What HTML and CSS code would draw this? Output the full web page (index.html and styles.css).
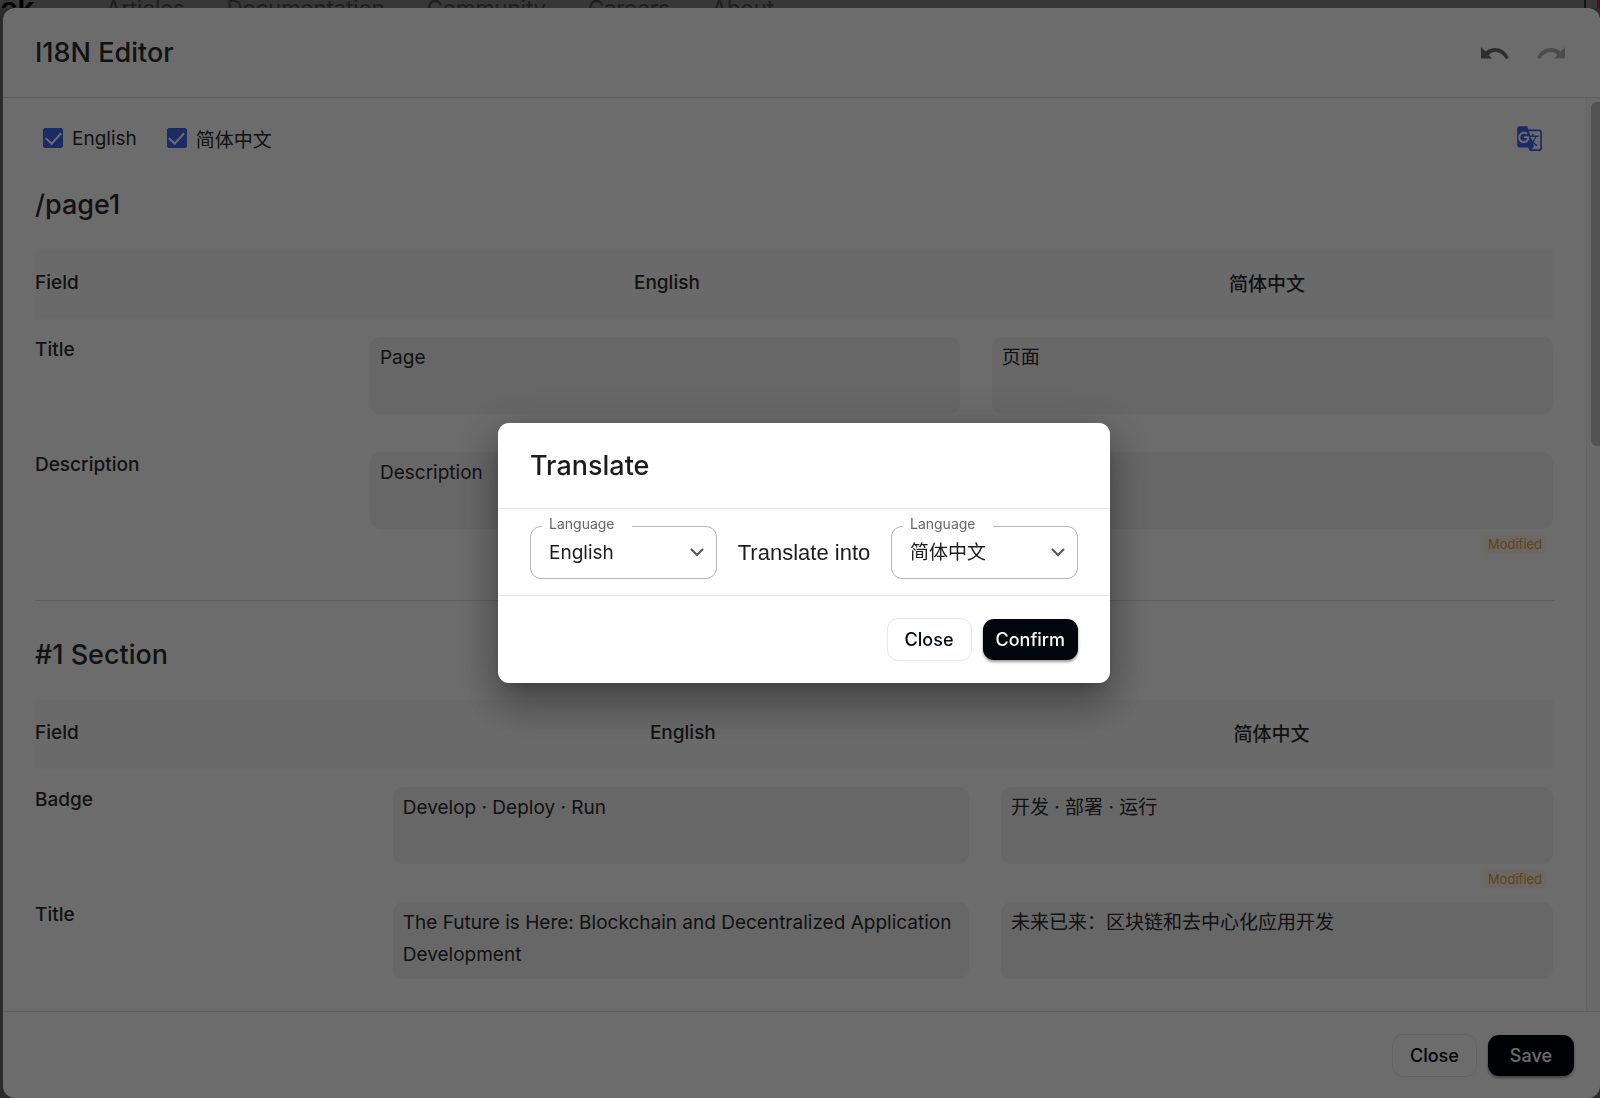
FILE: index.html
```html
<!DOCTYPE html>
<html lang="en">
<head>
    <meta charset="UTF-8">
    <title>I18N Editor</title>
    <link rel="stylesheet" href="styles.css">
</head>
<body>
    <!-- Site navigation behind the editor -->
    <nav class="site-nav">
        <a class="brand" href="#">ck</a>
        <a href="#">Articles</a>
        <a href="#">Documentation</a>
        <a href="#">Community</a>
        <a href="#">Careers</a>
        <a href="#">About</a>
        <span class="nav-edge"></span>
    </nav>

    <!-- Editor panel -->
    <main class="editor">
        <header class="editor-header">
            <h1>I18N Editor</h1>
            <div class="history">
                <button class="icon-button" type="button" aria-label="Undo">
                    <svg viewBox="0 0 28 12"><path d="M0 0v11.500h11L7.600 8C9.300 6.100 11.500 5 14 5c4.400 0 8 2.400 10.200 6.200q1 1 2.400.2 1.200-.8.700-2C24.600 4.200 19.800 1 14 1 10.500 1 7 2.300 4.500 4.500z"/></svg>
                </button>
                <button class="icon-button faded" type="button" aria-label="Redo">
                    <svg viewBox="0 0 28 12"><path d="M28 0v11.500H17L20.400 8C18.700 6.100 16.500 5 14 5c-4.400 0-8 2.400-10.200 6.200q-1 1-2.400.2-1.200-.8-.7-2C3.400 4.200 8.200 1 14 1c3.500 0 7 1.300 9.500 3.500z"/></svg>
                </button>
            </div>
        </header>

        <div class="editor-body">
            <div class="content">
                <div class="toolbar">
                    <label class="check"><input type="checkbox" checked> English</label>
                    <label class="check"><input type="checkbox" checked> 简体中文</label>
                    <button class="icon-button translate" type="button" aria-label="Translate">
                        <svg viewBox="0 0 24 24"><path d="M21 4H11l-1-3H3c-1.100 0-2 .9-2 2v15c0 1.100.9 2 2 2h8l1 3h9c1.100 0 2-.9 2-2V6c0-1.100-.9-2-2-2zM7 16c-2.760 0-5-2.240-5-5s2.240-5 5-5c1.350 0 2.480.5 3.350 1.300L9.030 8.570c-.38-.36-1.040-.78-2.030-.78-1.740 0-3.150 1.440-3.150 3.210S5.260 14.210 7 14.210c2.010 0 2.840-1.440 2.920-2.410H7v-1.710h4.680c.07.310.12.610.12 1.020C11.800 13.970 9.890 16 7 16zm6.170-5.420h3.700c-.43 1.250-1.110 2.430-2.050 3.470-.31-.35-.6-.72-.86-1.100l-.79-2.370zm8.330 9.920c0 .55-.45 1-1 1H14l2-2.500-1.040-3.100 3.100 3.100.92-.92-3.300-3.250.02-.02c1.130-1.250 1.930-2.690 2.400-4.220H20v-1.300h-4.530V8h-1.290v1.290h-1.440L11.460 5.500h9.040c.55 0 1 .45 1 1v14z"/></svg>
                    </button>
                </div>

                <section>
                    <h2>/page1</h2>
                    <table class="fields page-fields">
                        <colgroup><col class="col-name"><col class="col-en"><col></colgroup>
                        <thead>
                            <tr><th>Field</th><th>English</th><th>简体中文</th></tr>
                        </thead>
                        <tbody>
                            <tr>
                                <td>Title</td>
                                <td><textarea aria-label="Title, English">Page</textarea></td>
                                <td><textarea aria-label="Title, 简体中文">页面</textarea></td>
                            </tr>
                            <tr>
                                <td>Description</td>
                                <td><textarea aria-label="Description, English">Description</textarea></td>
                                <td><textarea aria-label="Description, 简体中文"></textarea><span class="modified">Modified</span></td>
                            </tr>
                        </tbody>
                    </table>
                </section>

                <hr>

                <section>
                    <h2>#1 Section</h2>
                    <table class="fields section-fields">
                        <colgroup><col class="col-name"><col class="col-en"><col></colgroup>
                        <thead>
                            <tr><th>Field</th><th>English</th><th>简体中文</th></tr>
                        </thead>
                        <tbody>
                            <tr>
                                <td>Badge</td>
                                <td><textarea aria-label="Badge, English">Develop · Deploy · Run</textarea></td>
                                <td><textarea aria-label="Badge, 简体中文">开发 · 部署 · 运行</textarea><span class="modified">Modified</span></td>
                            </tr>
                            <tr>
                                <td>Title</td>
                                <td><textarea aria-label="Title, English">The Future is Here: Blockchain and Decentralized Application Development</textarea></td>
                                <td><textarea aria-label="Title, 简体中文">未来已来：区块链和去中心化应用开发</textarea></td>
                            </tr>
                        </tbody>
                    </table>
                </section>
            </div>
            <div class="scrollbar"><div class="thumb"></div></div>
        </div>

        <footer class="editor-footer">
            <button class="button" type="button">Close</button>
            <button class="button primary save" type="button">Save</button>
        </footer>
    </main>

    <!-- Translate dialog -->
    <div class="backdrop">
        <div class="dialog" role="dialog" aria-labelledby="dialog-title">
            <h2 id="dialog-title">Translate</h2>
            <div class="dialog-body">
                <div class="select">
                    <label for="from">Language</label>
                    <select id="from"><option>English</option><option>简体中文</option></select>
                    <svg viewBox="0 0 14 9"><path d="M1 1l6 6 6-6"/></svg>
                </div>
                <span class="into">Translate into</span>
                <div class="select">
                    <label for="to">Language</label>
                    <select id="to"><option>简体中文</option><option>English</option></select>
                    <svg viewBox="0 0 14 9"><path d="M1 1l6 6 6-6"/></svg>
                </div>
            </div>
            <div class="dialog-actions">
                <button class="button" type="button">Close</button>
                <button class="button primary" type="button">Confirm</button>
            </div>
        </div>
    </div>
</body>
</html>
```
FILE: styles.css
```css
* {
    box-sizing: border-box;
}

body {
    margin: 0;
    height: 100vh;
    overflow: hidden;
    display: flex;
    flex-direction: column;
    background-color: #666;
    color: #2b2b2d;
    font-family: Inter, "Noto Sans CJK SC", sans-serif;
    font-size: 19px;
}

h1, h2 {
    margin: 0;
    font-size: 27px;
    font-weight: 500;
    line-height: 40px;
}

button, select, textarea {
    font-family: inherit;
    color: inherit;
}

/* Navigation */
.site-nav {
    height: 8px;
    display: flex;
    align-items: flex-start;
    gap: 42px;
    line-height: 16px;
    font-size: 22px;
    background-color: #828282;
    overflow: hidden;
}

.site-nav a {
    color: #484848;
    text-decoration: none;
}

.site-nav .brand {
    width: 64px;
    color: #000;
    font-size: 30px;
    font-weight: 600;
}

.nav-edge {
    width: 16px;
    height: 8px;
    margin-left: auto;
    border-left: 2px solid #333;
    border-right: 3px solid #a03048;
}

/* Editor */
.editor {
    flex: 1;
    min-height: 0;
    margin-left: 3px;
    display: flex;
    flex-direction: column;
    background-color: #fff;
    border-radius: 12px;
    overflow: hidden;
}

.editor-header {
    height: 90px;
    padding: 0 35px 0 32px;
    display: flex;
    align-items: center;
    justify-content: space-between;
    border-bottom: 1px solid #dedede;
}

.history {
    display: flex;
    gap: 28px;
}

.icon-button {
    padding: 0;
    border: none;
    background: none;
    cursor: pointer;
}

.icon-button svg {
    display: block;
    width: 28px;
    height: 12px;
    fill: #707070;
}

.icon-button.faded svg {
    fill: #b4b4b4;
}

.editor-body {
    flex: 1;
    min-height: 0;
    display: flex;
    overflow: hidden;
}

.content {
    flex: 1;
    padding: 16px 32px;
}

.scrollbar {
    width: 14px;
    padding: 4px 0 0 4px;
    border-left: 1px solid #ececec;
    background-color: #fafafa;
}

.thumb {
    height: 344px;
    border-radius: 6px 0 0 6px;
    background-color: #c1c1c1;
}

.toolbar {
    height: 48px;
    padding: 0 11px 0 8px;
    display: flex;
    align-items: center;
    gap: 30px;
}

.check {
    display: flex;
    align-items: center;
    gap: 9px;
}

.check input {
    appearance: none;
    display: flex;
    justify-content: center;
    width: 20px;
    height: 20px;
    margin: 0;
    border: 1px solid #4066ea;
    border-radius: 2px;
}

.check input:checked {
    background-color: #4066ea;
}

/* tick mark */
.check input:checked::after {
    content: "";
    width: 7px;
    height: 13px;
    border: solid #fff;
    border-width: 0 2px 2px 0;
    transform: rotate(42deg);
}

.translate {
    margin-left: auto;
}

.translate svg {
    width: 27px;
    height: 27px;
    fill: #4066ea;
}

section h2 {
    margin: 23px 0 25px;
}

/* Field tables */
.fields {
    width: 100%;
    table-layout: fixed;
    border-collapse: collapse;
}

.page-fields .col-name {
    width: 21%;
}

.page-fields .col-en {
    width: 41.2%;
}

.section-fields .col-name {
    width: 22.5%;
}

.section-fields .col-en {
    width: 40.3%;
}

th {
    height: 69px;
    padding: 0 0 4px;
    font-weight: 500;
    background-color: #fafafa;
}

th:first-child {
    text-align: left;
}

td {
    height: 115px;
    padding: 18px 20px 0 16px;
    vertical-align: top;
    font-weight: 500;
    line-height: 26px;
}

td:first-child {
    padding-left: 0;
}

td:last-child {
    padding-left: 12px;
    padding-right: 1px;
}

textarea {
    display: block;
    width: 100%;
    height: 77px;
    padding: 5px 10px;
    border: none;
    border-radius: 10px;
    resize: none;
    overflow: hidden;
    background-color: #f4f4f4;
    font-size: 19px;
    line-height: 32px;
}

.modified {
    display: block;
    width: 60px;
    margin: 6px 8px -8px auto;
    text-align: center;
    font-size: 13px;
    font-weight: 400;
    line-height: 18px;
    color: #e69a35;
    background-color: #fcf3e8;
    border-radius: 4px;
    box-shadow: 0 0 4px #fcf3e8;
}

hr {
    margin: 51px 0 0;
    border: none;
    border-top: 1px solid #dedede;
}

hr + section h2 {
    margin-top: 34px;
}

.editor-footer {
    height: 87px;
    padding: 0 26px;
    display: flex;
    align-items: center;
    justify-content: flex-end;
    gap: 11px;
    border-top: 1px solid #dedede;
}

/* Buttons */
.button {
    height: 43px;
    padding: 0 17px;
    border: 1px solid #e5e7eb;
    border-radius: 11px;
    background-color: #fff;
    color: #020617;
    font-size: 18px;
    font-weight: 500;
    cursor: pointer;
}

.primary {
    height: 41px;
    padding: 0 13px;
    border: none;
    background-color: #02060d;
    color: #f8fafc;
    box-shadow: 0 2px 3px rgba(0, 0, 0, 0.4);
}

.save {
    padding: 0 22px;
}

/* Dialog */
.backdrop {
    position: fixed;
    inset: 0;
    display: flex;
    align-items: center;
    justify-content: center;
    padding: 8px 0 0 8px;
    background-color: rgba(0, 0, 0, 0.575);
}

.dialog {
    width: 612px;
    border-radius: 11px;
    background-color: #fff;
    color: #1c1c1e;
    box-shadow: 0 11px 15px -7px rgba(0, 0, 0, 0.2), 0 24px 38px 3px rgba(0, 0, 0, 0.2), 0 9px 46px 8px rgba(0, 0, 0, 0.18);
}

.dialog h2 {
    padding: 23px 32px 22px;
}

.dialog-body {
    padding: 17px 32px 16px;
    display: flex;
    align-items: center;
    justify-content: space-between;
    border-top: 1px solid #e5e5e5;
    border-bottom: 1px solid #e5e5e5;
}

.select {
    position: relative;
    width: 187px;
}

.select label {
    position: absolute;
    top: -10px;
    left: 12px;
    width: 90px;
    padding-left: 7px;
    background-color: #fff;
    color: #666;
    font-size: 14px;
    line-height: 16px;
}

.select select {
    display: block;
    width: 100%;
    height: 53px;
    padding: 0 18px;
    appearance: none;
    border: 1px solid #b4b4b4;
    border-radius: 11px;
    background-color: #fff;
    font-size: 19px;
}

.select svg {
    position: absolute;
    top: 22px;
    right: 13px;
    width: 14px;
    height: 9px;
    fill: none;
    stroke: #555;
    stroke-width: 2;
    pointer-events: none;
}

.into {
    font-family: "Liberation Sans", Arial, sans-serif;
    font-size: 22px;
}

.dialog-actions {
    padding: 22px 32px;
    display: flex;
    align-items: center;
    justify-content: flex-end;
    gap: 11px;
}
```
